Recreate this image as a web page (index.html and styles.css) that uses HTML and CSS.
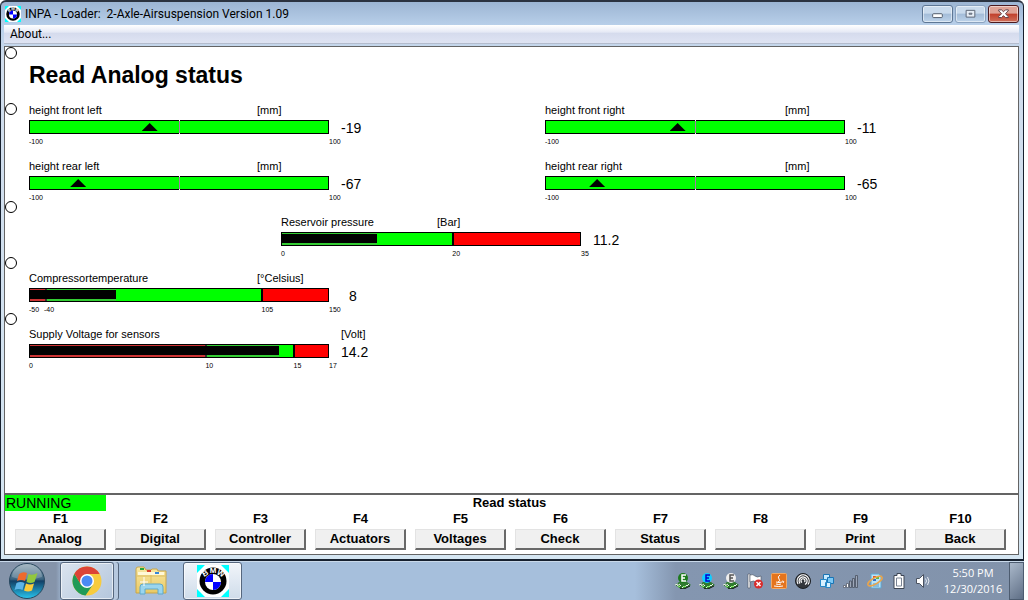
FILE: index.html
```
<!DOCTYPE html>
<html lang="en">

<head>
    <meta charset="utf-8">
    <title>INPA - Loader</title>
    <meta name="viewport" content="width=device-width, initial-scale=1">
    <link rel="stylesheet" href="styles.css">
</head>

<body>
    <svg class="defs" aria-hidden="true">
        <defs>
            <symbol id="logo" viewBox="0 0 32 32">
                <rect width="32" height="32" fill="#0ff" />
                <path d="M8 0h16l8 8v16l-8 8H8l-8-8V8z" fill="#fff" />
                <circle cx="16" cy="16" r="13.500" fill="#000" />
                <circle cx="16" cy="17" r="8" fill="#fff" />
                <path d="M16 17V9A8 8 0 0 0 8 17zM16 17V25A8 8 0 0 0 24 17z" fill="#00f" />
                <g class="logo-letters">
                    <text x="8" y="11" transform="rotate(-30 8 8)">B</text>
                    <text x="16" y="8">M</text>
                    <text x="24" y="11" transform="rotate(30 24 8)">W</text>
                </g>
            </symbol>
            <symbol id="chip" viewBox="0 0 16 16">
                <path d="M0 12l4-3h8l4 3-7 4H6z" fill="#2f7a2f" />
                <path d="M0 12l3-1M2 13l3-2M4 14l2-2M7 15l2-2M10 14l2-2M12 13l2-2" stroke="#f0f0f0" stroke-width="1" />
                <path d="M3 14l2-1M8 14l3-1" stroke="#7e5" />
                <path d="M5 15l2 1h2l6-3" fill="none" stroke="#111" />
                <circle cx="8" cy="5" r="5" fill="currentColor" />
            </symbol>
            <linearGradient id="orb" x1="0" y1="0" x2="0" y2="1">
                <stop offset="0" stop-color="#8fa6b5" />
                <stop offset=".45" stop-color="#3b6480" />
                <stop offset=".5" stop-color="#123f66" />
                <stop offset="1" stop-color="#28c5ee" />
            </linearGradient>
            <linearGradient id="folder" x1="0" y1="0" x2="0" y2="1">
                <stop offset="0" stop-color="#f9e9a5" />
                <stop offset="1" stop-color="#e9c964" />
            </linearGradient>
        </defs>
    </svg>

    <div class="window">
        <header class="titlebar">
            <svg class="app-icon"><use href="#logo" /></svg>
            <span class="title">INPA - Loader:&nbsp; 2-Axle-Airsuspension Version 1.09</span>
            <div class="caption">
                <button title="Minimize"><svg viewBox="0 0 30 16"><rect x="10" y="8" width="10" height="4" rx="1" fill="#fff" stroke="#4f5968" /></svg></button>
                <button class="dim" title="Maximize"><svg viewBox="0 0 30 16"><path d="M10.500 4.500h9v7h-9zM13.500 7.500h3v1h-3z" fill="#e6edf5" stroke="#5c6675" /></svg></button>
                <button class="close" title="Close"><svg viewBox="0 0 30 16"><path d="M10 4h3l2 2 2-2h3v1l-3 3 3 3v1h-3l-2-2-2 2h-3v-1l3-3-3-3z" fill="#fff" stroke="#5b3b42" /></svg></button>
            </div>
        </header>
        <nav class="menubar"><button>About...</button></nav>

        <div class="frame">
            <main class="screen">
                <section class="block heading">
                    <i class="dot"></i>
                    <h1>Read Analog status</h1>
                </section>

                <section class="block heights">
                    <i class="dot"></i>
                    <div class="gauge">
                        <div class="head"><span>height front left</span><span>[mm]</span></div>
                        <div class="track"><i class="seg ok" style="width:100%"></i><i class="mid"></i><i class="marker" style="left:40.5%"></i></div>
                        <output>-19</output>
                        <div class="scale"><span style="left:0%">-100</span><span style="left:100%">100</span></div>
                    </div>
                    <div class="gauge wide">
                        <div class="head"><span>height front right</span><span>[mm]</span></div>
                        <div class="track"><i class="seg ok" style="width:100%"></i><i class="mid"></i><i class="marker" style="left:44.5%"></i></div>
                        <output>-11</output>
                        <div class="scale"><span style="left:0%">-100</span><span style="left:100%">100</span></div>
                    </div>
                    <div class="gauge">
                        <div class="head"><span>height rear left</span><span>[mm]</span></div>
                        <div class="track"><i class="seg ok" style="width:100%"></i><i class="mid"></i><i class="marker" style="left:16.5%"></i></div>
                        <output>-67</output>
                        <div class="scale"><span style="left:0%">-100</span><span style="left:100%">100</span></div>
                    </div>
                    <div class="gauge wide">
                        <div class="head"><span>height rear right</span><span>[mm]</span></div>
                        <div class="track"><i class="seg ok" style="width:100%"></i><i class="mid"></i><i class="marker" style="left:17.5%"></i></div>
                        <output>-65</output>
                        <div class="scale"><span style="left:0%">-100</span><span style="left:100%">100</span></div>
                    </div>
                </section>

                <section class="block pressure">
                    <i class="dot"></i>
                    <div class="gauge">
                        <div class="head"><span>Reservoir pressure</span><span>[Bar]</span></div>
                        <div class="track"><i class="seg ok" style="width:57.1%"></i><i class="seg bad" style="width:42.9%"></i><i class="fill" style="width:32%"></i></div>
                        <output>11.2</output>
                        <div class="scale"><span style="left:0%">0</span><span style="left:57.1%">20</span><span style="left:100%">35</span></div>
                    </div>
                </section>

                <section class="block">
                    <i class="dot"></i>
                    <div class="gauge">
                        <div class="head"><span>Compressortemperature</span><span>[°Celsius]</span></div>
                        <div class="track"><i class="seg bad" style="width:5%"></i><i class="seg ok" style="width:72.5%"></i><i class="seg bad" style="width:22.5%"></i><i class="fill" style="width:29%"></i></div>
                        <output class="single">8</output>
                        <div class="scale"><span style="left:0%">-50</span><span style="left:5%">-40</span><span style="left:77.5%">105</span><span style="left:100%">150</span></div>
                    </div>
                </section>

                <section class="block voltage">
                    <i class="dot"></i>
                    <div class="gauge">
                        <div class="head"><span>Supply Voltage for sensors</span><span>[Volt]</span></div>
                        <div class="track"><i class="seg bad" style="width:58.8%"></i><i class="seg ok" style="width:29.4%"></i><i class="seg bad" style="width:11.8%"></i><i class="fill" style="width:83.5%"></i></div>
                        <output>14.2</output>
                        <div class="scale"><span style="left:0%">0</span><span style="left:58.8%">10</span><span style="left:88.2%">15</span><span style="left:100%">17</span></div>
                    </div>
                </section>
            </main>

            <footer class="panel">
                <div class="status"><span class="running">RUNNING</span><span>Read status</span><span></span></div>
                <div class="keys">
                    <label for="f1">F1</label>
                    <label for="f2">F2</label>
                    <label for="f3">F3</label>
                    <label for="f4">F4</label>
                    <label for="f5">F5</label>
                    <label for="f6">F6</label>
                    <label for="f7">F7</label>
                    <label for="f8">F8</label>
                    <label for="f9">F9</label>
                    <label for="f10">F10</label>
                    <button id="f1">Analog</button>
                    <button id="f2">Digital</button>
                    <button id="f3">Controller</button>
                    <button id="f4">Actuators</button>
                    <button id="f5">Voltages</button>
                    <button id="f6">Check</button>
                    <button id="f7">Status</button>
                    <button id="f8"></button>
                    <button id="f9">Print</button>
                    <button id="f10">Back</button>
                </div>
            </footer>
        </div>
    </div>

    <div class="taskbar">
        <button class="start" title="Start">
            <svg viewBox="0 0 38 38">
                <circle cx="19" cy="19" r="17.500" fill="url(#orb)" stroke="#28485f" />
                <path d="M4 15a15 13 0 0 1 30 0q-15 5-30 0z" fill="#fff" opacity=".22" />
                <path d="M11 12q4-3 8-1l-2 8q-4-2-8 0z" fill="#ee6a2d" />
                <path d="M20.500 12q4 2 9-1l-3 9q-4 2-8 0z" fill="#92c83e" />
                <path d="M8.500 21q4-2 8 0l-2 7q-4-2-8 0z" fill="#5db4e8" />
                <path d="M18 21.500q4 2 8 0l-2 7q-4 2-8 0z" fill="#fccb3a" />
            </svg>
        </button>
        <button class="task open stacked" title="Google Chrome">
            <svg viewBox="0 0 32 32">
                <circle cx="16" cy="16" r="14.500" fill="#f7cb3e" />
                <path d="M3.400 8.700A14.500 14.500 0 0 0 14.500 30.400L22 19.500 10 19.500z" fill="#209a57" />
                <path d="M3.400 8.700A14.500 14.500 0 0 1 28.600 9H16L10 19.500z" fill="#dc4437" />
                <circle cx="16" cy="16" r="7" fill="#fff" />
                <circle cx="16" cy="16" r="5.500" fill="#4a8af4" />
            </svg>
        </button>
        <button class="task explorer" title="Windows Explorer">
            <svg viewBox="0 0 32 32">
                <path d="M1 4q0-2 2-2h6l2 3h5l1-1h5l1 2h8v22H1z" fill="url(#folder)" stroke="#c9a64a" />
                <path d="M3 7h26v3H3z" fill="#fff8d8" />
                <path d="M5 3h4v2H5z" fill="#23a83a" />
                <path d="M12 5h4v2h-4z" fill="#d8402c" />
                <path d="M20 7h4v2h-4z" fill="#3486d8" />
                <path d="M2 11h28M16 10v8" stroke="#dbbd62" />
                <path d="M5 29v-7q0-3 3-3h17q3 0 3 3v7h-5v-5H10v5z" fill="#9ad5ee" stroke="#5fa9cc" />
                <path d="M9 12v9M5 17h8" stroke="#fff" />
            </svg>
        </button>
        <button class="task open active" title="INPA">
            <svg><use href="#logo" /></svg>
        </button>

        <div class="tray">
            <svg class="green" viewBox="0 0 16 16"><use href="#chip" /><path d="M11 2H7v6h4M7 5h3" fill="none" stroke="#fff" stroke-width="1.500" /></svg>
            <svg class="cyan" viewBox="0 0 16 16"><use href="#chip" /><path d="M11 2H7v6h4M7 5h3" fill="none" stroke="#00c" stroke-width="1.500" /></svg>
            <svg class="white" viewBox="0 0 16 16"><use href="#chip" /><path d="M11 2H7v6h4M7 5h3" fill="none" stroke="#555" stroke-width="1.500" /></svg>
            <svg viewBox="0 0 16 16">
                <path d="M1 1h2v14H1z" fill="#fff" stroke="#4a5260" stroke-width=".6" />
                <path d="M3 2q3-1 5 1t6 0v7q-3 1-5-1T3 9z" fill="#fff" stroke="#4a5260" stroke-width=".6" />
                <circle cx="11.500" cy="11" r="4.500" fill="#d92b2b" />
                <path d="M9.500 9l4 4M13.500 9l-4 4" stroke="#fff" stroke-width="1.500" />
            </svg>
            <svg viewBox="0 0 16 16">
                <rect x=".5" y=".5" width="15" height="15" rx="1" fill="#e4741d" stroke="#f3a964" />
                <path d="M9 2q-3 2-1 4t-1 3M5 9q3 1 6 0M11 8q3 0 1 2M5 11q3 1 5 0M3 13q5 1 9 0" fill="none" stroke="#fff" />
            </svg>
            <svg viewBox="0 0 16 16">
                <circle cx="8" cy="8" r="7.500" fill="#33363b" stroke="#1d2024" />
                <path d="M3 11A6 6 0 1 1 13 11.500M5 10.500A4 4 0 1 1 10 11.500" fill="none" stroke="#fff" stroke-width="1.200" />
                <path d="M7 9.500A2 2 0 1 1 9.500 9" fill="none" stroke="#fff" stroke-width="1.200" />
            </svg>
            <svg viewBox="0 0 16 16">
                <path d="M4.500 1.500h6v6h-6z" fill="#c7ebff" stroke="#1b75b5" />
                <path d="M8.500 4.500h6v6h-6z" fill="#7dc9f5" stroke="#1b75b5" />
                <path d="M1.500 6.500h6v7h-6zM6.500 9.500h5v5h-5z" fill="#d7f1ff" stroke="#2688c7" />
            </svg>
            <svg viewBox="0 0 16 16">
                <path d="M.500 12.500h2v2h-2z" fill="#fff" stroke="#4a5260" stroke-width=".7" />
                <path d="M3.500 10.500h2v4h-2z" fill="#fff" stroke="#4a5260" stroke-width=".7" />
                <path d="M6.500 8h2v6.500h-2zM9.500 5.500h2v9h-2zM12.500 2.500h2v12h-2z" fill="#9da7b8" stroke="#4a5260" stroke-width=".8" />
            </svg>
            <svg viewBox="0 0 16 16">
                <path d="M4 1h8l2 2v12H4z" fill="#b9e3f7" stroke="#5ca8d4" />
                <path d="M6 3h3v2H6z" fill="#e05b2c" />
                <path d="M9 4h3v2H9z" fill="#67b43c" />
                <path d="M6 6h3v2H6z" fill="#3472c4" />
                <path d="M6 11h6M6 13h6" stroke="#5294c2" />
                <ellipse cx="8" cy="8" rx="8" ry="3" fill="none" stroke="#eba54a" stroke-width="1.500" transform="rotate(-30 8 8)" />
            </svg>
            <svg viewBox="0 0 16 16">
                <path d="M6 .500h4v2h3v13H3v-13h3z" fill="#fff" stroke="#3e4654" />
                <path d="M5.500 5h5v8h-5z" fill="#fff" stroke="#7a8494" />
            </svg>
            <svg viewBox="0 0 16 16">
                <path d="M1.500 5.500h3l4-4v13l-4-4h-3z" fill="#fff" stroke="#4a5260" />
                <path d="M10.500 5.500q2 2.500 0 5M12.500 4q3 4 0 8" fill="none" stroke="#e8edf4" />
            </svg>
        </div>
        <div class="clock"><span>5:50 PM</span><span>12/30/2016</span></div>
        <button class="peek" title="Show desktop"></button>
    </div>
</body>

</html>
```
FILE: styles.css
```
* {
    box-sizing: border-box;
}

body {
    display: flex;
    flex-direction: column;
    min-height: 100vh;
    margin: 0;
    padding-right: 4px;
    background: #fff;
    color: #000;
    font-family: "Liberation Sans", Arial, sans-serif;
    font-size: 11px;
}

button {
    margin: 0;
    padding: 0;
    border: none;
    background: none;
    color: inherit;
    font: inherit;
}

svg {
    display: block;
}

.defs {
    position: absolute;
    width: 0;
    height: 0;
}

.logo-letters {
    fill: #fff;
    font-size: 8px;
    font-weight: bold;
    text-anchor: middle;
}

/* window */
.window {
    display: flex;
    flex: 1;
    flex-direction: column;
    padding: 0 4px 4px 3px;
    border: 1px solid #16202e;
    border-top: 2px solid #2b3340;
    border-bottom-width: 2px;
    border-radius: 6px 6px 0 0;
    background: linear-gradient(#9cb5d3, #b9d0ea 24px, #cfdcec 60px, #d5e6f2);
}

.titlebar {
    display: flex;
    height: 23px;
    align-items: center;
    gap: 4px;
    font-family: Roboto, "Noto Sans", sans-serif;
    font-size: 12px;
}

.app-icon {
    width: 16px;
    height: 16px;
    margin-left: 1px;
}

.title {
    flex: 1;
    white-space: nowrap;
}

.caption {
    display: flex;
    gap: 2px;
}

.caption button {
    width: 31px;
    height: 18px;
    border: 1px solid #5d7694;
    border-radius: 3px;
    background: linear-gradient(#c9daec 45%, #a3bcd8 50%, #bdd3ea);
    box-shadow: inset 0 0 0 1px rgba(255, 255, 255, .5);
}

.caption .dim {
    border-color: #8aa2bf;
}

.caption .close {
    border-color: #4c1a1e;
    background: linear-gradient(#dfa295 45%, #c1402c 50%, #d0705a);
}

.menubar {
    height: 19px;
    margin-bottom: 2px;
    padding-left: 6px;
    border-bottom: 1px solid #b4bccd;
    background: linear-gradient(#fff, #e5e9f5 40%, #d5dbed 45%, #dfe4f3);
    font-family: Roboto, "Noto Sans", sans-serif;
    font-size: 12px;
    line-height: 18px;
}

.frame {
    display: flex;
    flex: 1;
    flex-direction: column;
    border: 1px solid #646464;
    background: #fff;
}

/* gauges */
.screen {
    flex: 1;
}

.block {
    position: relative;
    padding: 14px 0 0 24px;
}

.dot {
    position: absolute;
    top: 0;
    left: 0;
    width: 12px;
    height: 12px;
    border: 1px solid #000;
    border-radius: 50%;
}

h1 {
    margin: 0;
    padding-bottom: 14px;
    font-size: 23px;
    line-height: 28px;
}

.heights {
    display: grid;
    grid-template-columns: 12fr 11fr;
    gap: 14px 0;
    padding-top: 0;
}

.pressure {
    padding-left: 276px;
}

.gauge {
    display: grid;
    grid-template-columns: 300px auto;
    justify-content: start;
    column-gap: 12px;
}

.head {
    display: grid;
    grid-column: 1 / -1;
    grid-template-columns: 228px auto;
    margin-bottom: 3px;
    line-height: 14px;
}

.wide .head {
    grid-template-columns: 240px auto;
}

.pressure .head {
    grid-template-columns: 156px auto;
}

.voltage .head {
    grid-template-columns: 312px auto;
}

.track {
    position: relative;
    display: flex;
    height: 14px;
    border: 1px solid #000;
}

.seg + .seg {
    border-left: 2px solid #000;
}

.ok {
    background: #0f0;
}

.bad {
    background: #f00;
}

.fill {
    position: absolute;
    top: 1px;
    left: 0;
    height: 9px;
    background: #000;
    box-shadow: 0 -1px rgba(128, 128, 128, .4), 0 2px rgba(128, 128, 128, .4);
}

.mid {
    position: absolute;
    top: -1px;
    left: 50%;
    width: 1px;
    height: 14px;
    border: solid #fff;
    border-width: 1px 0;
    background: #a878a8;
}

.marker {
    position: absolute;
    top: 2px;
    width: 16px;
    height: 8px;
    margin-left: -9px;
    background: #000;
    clip-path: polygon(50% 0, 100% 100%, 0 100%);
}

output {
    height: 14px;
    font-size: 14px;
    line-height: 16px;
}

.single {
    padding-left: 8px;
}

.scale {
    position: relative;
    height: 7px;
    margin-top: 4px;
    font-size: 7px;
    line-height: 8px;
}

.scale span {
    position: absolute;
}

/* function keys */
.panel {
    padding-bottom: 4px;
    border-top: 2px solid #646464;
    font-size: 13px;
    font-weight: bold;
    line-height: 16px;
}

.status {
    display: grid;
    grid-template-columns: 101px 1fr 105px;
    text-align: center;
}

.running {
    padding-left: 1px;
    background: #0f0;
    font-size: 14px;
    font-weight: normal;
    text-align: left;
}

.keys {
    display: grid;
    grid-template-columns: repeat(10, 1fr);
    gap: 2px 9px;
    padding: 0 12px 0 10px;
    text-align: center;
}

.keys button {
    height: 21px;
    border: 1px solid #e3e3e3;
    border-right: 2px solid #696969;
    border-bottom: 2px solid #696969;
    background: #f0f0f0;
}

/* taskbar */
.taskbar {
    display: flex;
    height: 39px;
    border-top: 1px solid #c9d9ea;
    background: linear-gradient(90deg, #8594aa, #8594aa 56px, #a6bfdc 64px, #a6bfdc 62%, #8496b0 66%, #8293ab);
}

.start {
    width: 38px;
    margin: 0 14px 0 8px;
}

.task {
    display: flex;
    width: 59px;
    align-items: center;
    justify-content: center;
}

.task svg {
    width: 32px;
    height: 32px;
}

.open {
    border: 1px solid #56677e;
    border-radius: 3px;
    background: linear-gradient(135deg, #dbe4ef, #b4c6dc);
    box-shadow: inset 0 0 0 1px rgba(255, 255, 255, .6);
}

.active {
    background: linear-gradient(#f1f5fa, #cfdcea);
}

.stacked {
    width: 54px;
    box-shadow: inset 0 0 0 1px rgba(255, 255, 255, .6), 4px 0 #b6c8de, 5px 0 #56677e;
}

.explorer {
    width: 60px;
    margin: 0 2px 0 7px;
}

.tray {
    display: flex;
    align-items: center;
    gap: 8px;
    margin-left: auto;
}

.tray svg {
    width: 16px;
    height: 16px;
}

.green {
    color: #1c7a1c;
}

.cyan {
    color: #1cf;
}

.white {
    color: #eee;
}

.clock {
    display: flex;
    width: 72px;
    flex-direction: column;
    justify-content: center;
    margin-left: 6px;
    color: #fff;
    font-family: "Open Sans", "Noto Sans", sans-serif;
    line-height: 16px;
    text-align: center;
}

.peek {
    width: 15px;
    border: 1px solid #4d5c70;
    background: linear-gradient(135deg, #aab8ca, #5f6f86);
}
```
